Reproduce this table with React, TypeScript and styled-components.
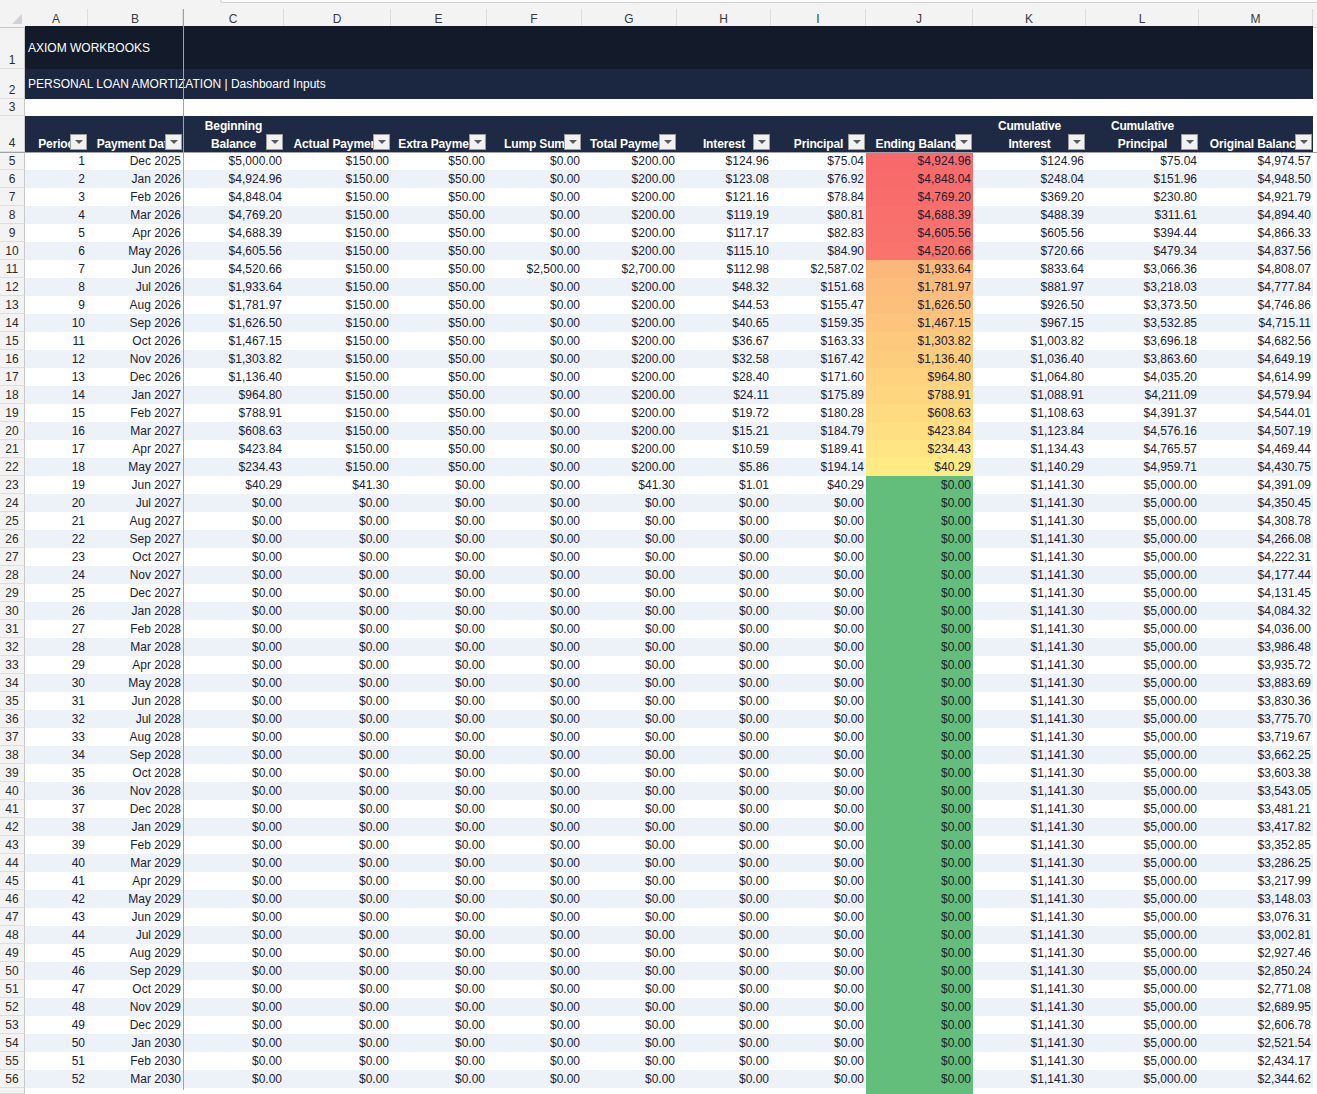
import React from 'react';
import styled, { createGlobalStyle } from 'styled-components';

const COLS = '25px 63px 95px 101px 107px 96px 95px 95px 94px 95px 107px 113px 113px 114px 1fr';

const GlobalStyle = createGlobalStyle`
  html, body {
    margin: 0;
    padding: 0;
    background: #ffffff;
    overflow: hidden;
  }
  body {
    font-family: 'Liberation Sans', Arial, sans-serif;
    font-size: 12px;
  }
`;

const Sheet = styled.div`
  position: relative;
  width: 1317px;
  height: 1094px;
  overflow: hidden;
  background: #ffffff;
`;

const TopStrip = styled.div`
  height: 9px;
  background: #f3f3f3;
  display: flex;
`;

const FormulaEdge = styled.div`
  margin-left: 220px;
  flex: 1;
  height: 2px;
  background: #ffffff;
  border: 1px solid #d4d4d4;
  border-top: none;
  border-right: none;
  border-bottom-left-radius: 5px;
`;

const GridRow = styled.div<{ $h: number; $lift?: boolean }>`
  display: grid;
  grid-template-columns: ${COLS};
  height: ${(p) => p.$h}px;
  position: ${(p) => (p.$lift ? 'relative' : 'static')};
  z-index: ${(p) => (p.$lift ? 1 : 'auto')};
  box-shadow: ${(p) => (p.$lift ? '0 1px 0 #9fa3a8' : 'none')};
`;

const Corner = styled.div`
  position: relative;
  background: #f3f3f3;
  border-bottom: 1px solid #c6c6c6;
  box-sizing: border-box;
  &::after {
    content: '';
    position: absolute;
    right: 3px;
    bottom: 3px;
    width: 0;
    height: 0;
    border-left: 10px solid transparent;
    border-bottom: 10px solid #d2d2d2;
  }
`;

const ColLetter = styled.div<{ $filler?: boolean }>`
  box-sizing: border-box;
  background: #f3f3f3;
  color: #3a3a3a;
  font-size: 12px;
  text-align: center;
  line-height: 16px;
  border-bottom: 1px solid #c6c6c6;
  border-right: 1px solid ${(p) => (p.$filler ? 'transparent' : '#dcdcdc')};
  padding-top: 2px;
`;

const RowNum = styled.div<{ $align?: 'center' | 'flex-end' }>`
  box-sizing: border-box;
  display: flex;
  align-items: ${(p) => p.$align || 'center'};
  justify-content: center;
  background: #f3f3f3;
  color: #2b2b2b;
  font-size: 12px;
  border-right: 1px solid #c8c8c8;
  border-bottom: 1px solid #dedede;
  padding-top: ${(p) => (p.$align === 'flex-end' ? '0' : '1px')};
  padding-bottom: ${(p) => (p.$align === 'flex-end' ? '1px' : '0')};
`;

const TitleBand = styled.div<{ $bg: string }>`
  grid-column: span 13;
  background: ${(p) => p.$bg};
  color: #ffffff;
  font-size: 12px;
  display: flex;
  align-items: center;
  padding-left: 3px;
  white-space: nowrap;
`;

const HeadCell = styled.div`
  position: relative;
  overflow: hidden;
  background: #1e2a44;
  color: #ffffff;
  font-weight: 700;
  font-size: 12px;
  letter-spacing: -0.15px;
  line-height: 18px;
  display: flex;
  flex-direction: column;
  justify-content: flex-end;
  align-items: center;
  white-space: nowrap;
  padding-bottom: 0;
  > span {
    position: relative;
    top: 1px;
  }
`;

const FilterBtn = styled.i`
  position: absolute;
  right: 1px;
  bottom: 2px;
  width: 17px;
  height: 16px;
  box-sizing: border-box;
  background: #f1f1f1;
  border: 1px solid #9c9c9c;
  &::after {
    content: '';
    position: absolute;
    left: 4px;
    top: 5px;
    border-left: 4px solid transparent;
    border-right: 4px solid transparent;
    border-top: 4px solid #5a5a5a;
  }
`;

const Cell = styled.div<{ $bg?: string }>`
  background: ${(p) => p.$bg || 'transparent'};
  color: #1a2030;
  font-size: 12px;
  line-height: 19px;
  text-align: right;
  padding-right: 2px;
  white-space: nowrap;
  overflow: hidden;
`;

const DataRow = styled(GridRow)<{ $stripe: boolean }>`
  background: linear-gradient(
    to right,
    transparent 25px,
    ${(p) => (p.$stripe ? '#edf2f9' : '#ffffff')} 25px,
    ${(p) => (p.$stripe ? '#edf2f9' : '#ffffff')} 1313px,
    transparent 1313px
  );
`;

const FreezeLine = styled.div`
  position: absolute;
  left: 183px;
  top: 9px;
  bottom: 4px;
  width: 1px;
  background: #a2a2a2;
  z-index: 2;
`;

const LETTERS = ['A', 'B', 'C', 'D', 'E', 'F', 'G', 'H', 'I', 'J', 'K', 'L', 'M'];

const HEADERS: string[][] = [
  ['Period'],
  ['Payment Date'],
  ['Beginning', 'Balance'],
  ['Actual Payment'],
  ['Extra Payment'],
  ['Lump Sum'],
  ['Total Payment'],
  ['Interest'],
  ['Principal'],
  ['Ending Balance'],
  ['Cumulative', 'Interest'],
  ['Cumulative', 'Principal'],
  ['Original Balance'],
];

const MONTHS = ['Jan', 'Feb', 'Mar', 'Apr', 'May', 'Jun', 'Jul', 'Aug', 'Sep', 'Oct', 'Nov', 'Dec'];

const interest = [124.96, 123.08, 121.16, 119.19, 117.17, 115.1, 112.98, 48.32, 44.53, 40.65, 36.67, 32.58, 28.4, 24.11, 19.72, 15.21, 10.59, 5.86, 1.01];
const principal = [75.04, 76.92, 78.84, 80.81, 82.83, 84.9, 2587.02, 151.68, 155.47, 159.35, 163.33, 167.42, 171.6, 175.89, 180.28, 184.79, 189.41, 194.14, 40.29];
const ending = [4924.96, 4848.04, 4769.2, 4688.39, 4605.56, 4520.66, 1933.64, 1781.97, 1626.5, 1467.15, 1303.82, 1136.4, 964.8, 788.91, 608.63, 423.84, 234.43, 40.29, 0];
const cumInt = [124.96, 248.04, 369.2, 488.39, 605.56, 720.66, 833.64, 881.97, 926.5, 967.15, 1003.82, 1036.4, 1064.8, 1088.91, 1108.63, 1123.84, 1134.43, 1140.29, 1141.3];
const cumPrin = [75.04, 151.96, 230.8, 311.61, 394.44, 479.34, 3066.36, 3218.03, 3373.5, 3532.85, 3696.18, 3863.6, 4035.2, 4211.09, 4391.37, 4576.16, 4765.57, 4959.71, 5000];
const original = [
  4974.57, 4948.5, 4921.79, 4894.4, 4866.33, 4837.56, 4808.07, 4777.84, 4746.86, 4715.11, 4682.56, 4649.19, 4614.99,
  4579.94, 4544.01, 4507.19, 4469.44, 4430.75, 4391.09, 4350.45, 4308.78, 4266.08, 4222.31, 4177.44, 4131.45, 4084.32,
  4036.0, 3986.48, 3935.72, 3883.69, 3830.36, 3775.7, 3719.67, 3662.25, 3603.38, 3543.05, 3481.21, 3417.82, 3352.85,
  3286.25, 3217.99, 3148.03, 3076.31, 3002.81, 2927.46, 2850.24, 2771.08, 2689.95, 2606.78, 2521.54, 2434.17, 2344.62,
];

const money = (v: number) => {
  const [whole, frac] = v.toFixed(2).split('.');
  return '$' + whole.replace(/\B(?=(\d{3})+(?!\d))/g, ',') + '.' + frac;
};

// green for a paid-off balance, yellow -> red as the balance grows
const scaleColor = (v: number) => {
  if (v === 0) return '#63be7b';
  const t = Math.min(1, v / 4924.96);
  const mix = (a: number, b: number) => Math.round(a + (b - a) * t);
  return `rgb(${mix(255, 248)}, ${mix(235, 105)}, ${mix(132, 107)})`;
};

type Loan = { period: number; date: string; values: number[] };

const rows: Loan[] = original.map((orig, i) => {
  const m = 11 + i;
  const date = `${MONTHS[m % 12]} ${2025 + Math.floor(m / 12)}`;
  if (i < 19) {
    const begin = i === 0 ? 5000 : ending[i - 1];
    const pay = i === 18 ? 41.3 : 150;
    const extra = i === 18 ? 0 : 50;
    const lump = i === 6 ? 2500 : 0;
    const total = pay + extra + lump;
    return {
      period: i + 1,
      date,
      values: [begin, pay, extra, lump, total, interest[i], principal[i], ending[i], cumInt[i], cumPrin[i], orig],
    };
  }
  return { period: i + 1, date, values: [0, 0, 0, 0, 0, 0, 0, 0, 1141.3, 5000, orig] };
});

const App = () => {
  return (
    <>
      <GlobalStyle />
      <Sheet>
        <TopStrip>
          <FormulaEdge />
        </TopStrip>
        <GridRow $h={17}>
          <Corner />
          {LETTERS.map((l) => (
            <ColLetter key={l}>{l}</ColLetter>
          ))}
          <ColLetter $filler />
        </GridRow>
        <GridRow $h={43}>
          <RowNum $align="flex-end">1</RowNum>
          <TitleBand $bg="#131a2a">AXIOM WORKBOOKS</TitleBand>
        </GridRow>
        <GridRow $h={30}>
          <RowNum $align="flex-end">2</RowNum>
          <TitleBand $bg="#1b2740">PERSONAL LOAN AMORTIZATION | Dashboard Inputs</TitleBand>
        </GridRow>
        <GridRow $h={17}>
          <RowNum $align="flex-end">3</RowNum>
        </GridRow>
        <GridRow $h={36} $lift>
          <RowNum $align="flex-end">4</RowNum>
          {HEADERS.map((lines) => (
            <HeadCell key={lines.join(' ')}>
              {lines.map((t) => (
                <span key={t}>{t}</span>
              ))}
              <FilterBtn />
            </HeadCell>
          ))}
        </GridRow>
        {rows.map((r) => (
          <DataRow key={r.period} $h={18} $stripe={r.period % 2 === 0}>
            <RowNum>{r.period + 4}</RowNum>
            <Cell style={{ paddingRight: 3 }}>{r.period}</Cell>
            <Cell>{r.date}</Cell>
            {r.values.map((v, j) => (
              <Cell key={j} $bg={j === 7 ? scaleColor(v) : undefined}>
                {money(v)}
              </Cell>
            ))}
          </DataRow>
        ))}
        <DataRow $h={6} $stripe={false}>
          <RowNum />
          {LETTERS.map((l) => (
            <Cell key={l} $bg={l === 'J' ? '#63be7b' : undefined} />
          ))}
        </DataRow>
        <FreezeLine />
      </Sheet>
    </>
  );
};

export default App;
